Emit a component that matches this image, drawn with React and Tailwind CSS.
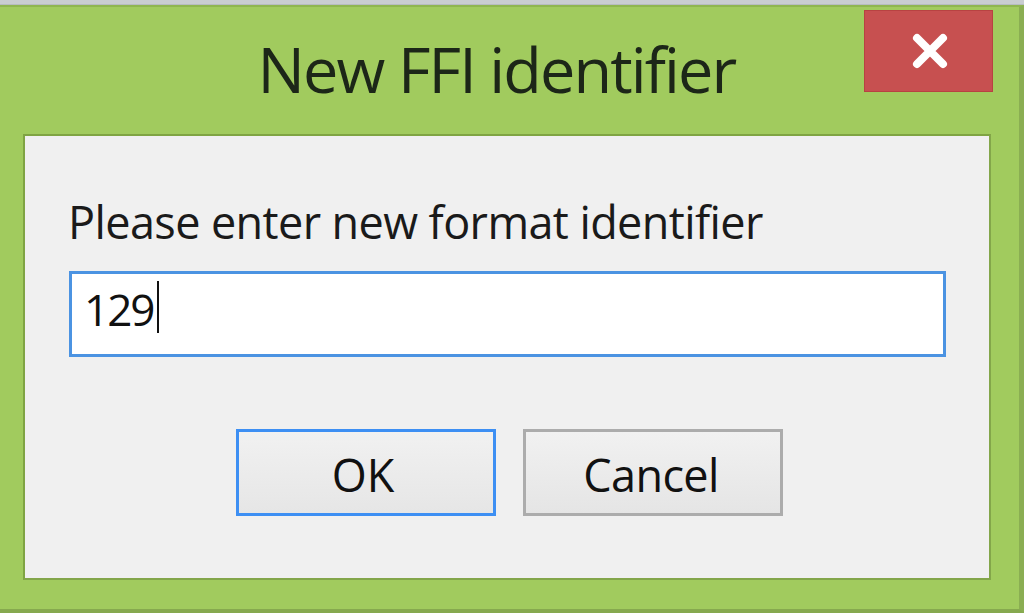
import React from "react";

const font = { fontFamily: '"Open Sans", "Noto Sans", sans-serif' };

export default function App() {
  return (
    <div
      className="w-[1024px] h-[613px] bg-[#cfd3d7] flex flex-col overflow-hidden"
      style={font}
    >
      <div className="h-[5px] bg-[#c9cdd1] border-b border-[#b7bcc0]" />
      <div className="flex-1 flex flex-col bg-[#a1cb5e] border-t-2 border-[#8fb650] border-r-[5px] border-r-[#8aae52] border-b-[4px] border-b-[#86a94f]">
        <div className="relative h-[127px] flex items-start justify-center pr-[26px]">
          <div className="mt-[30px] text-[63px] leading-none text-[#1c2618] tracking-[-1.9px]">
            New FFI identifier
          </div>
          <div className="absolute right-[26px] top-[3px] w-[129px] h-[82px] bg-[#c75050] border border-[#b84242] flex items-center justify-center">
            <svg width="40" height="38" viewBox="0 0 40 38" className="ml-[2px]">
              <path d="M7 6 L33 32 M33 6 L7 32" stroke="#ffffff" strokeWidth="8" strokeLinecap="round" />
            </svg>
          </div>
        </div>
        <div className="ml-[23px] w-[968px] h-[446px] bg-[#f0f0f0] border-t-2 border-l-2 border-[#7fa443] border-b-2 border-r-2 border-b-[#83a64a] border-r-[#83a64a] flex flex-col">
          <div className="mt-[63px] ml-[43px] text-[45px] leading-none text-[#1a1a1a] whitespace-nowrap tracking-[-0.6px]">
            Please enter new format identifier
          </div>
          <div className="mt-[27px] ml-[44px] w-[877px] h-[86px] bg-white border-[3px] border-[#4b93e2] flex items-start pl-[12px] pt-[13px]">
            <span className="text-[44px] leading-none text-[#111111] tracking-[-2px]">129</span>
            <span className="ml-[4px] -mt-[6px] w-[2px] h-[52px] bg-[#111111]" />
          </div>
          <div className="mt-[72px] ml-[211px] flex gap-[27px]">
            <div className="w-[260px] h-[87px] border-[3px] border-[#3d8ff3] bg-gradient-to-b from-[#f1f1f1] to-[#e6e6e6] flex items-center justify-center text-[45px] leading-none text-[#111111]">
              <span className="-ml-[6px] mt-[3px]">OK</span>
            </div>
            <div className="w-[260px] h-[87px] border-[3px] border-[#acacac] bg-gradient-to-b from-[#f1f1f1] to-[#e5e5e5] flex items-center justify-center text-[45px] leading-none text-[#111111] tracking-[-0.6px]">
              <span className="-ml-[4px] mt-[3px]">Cancel</span>
            </div>
          </div>
        </div>
      </div>
    </div>
  );
}
